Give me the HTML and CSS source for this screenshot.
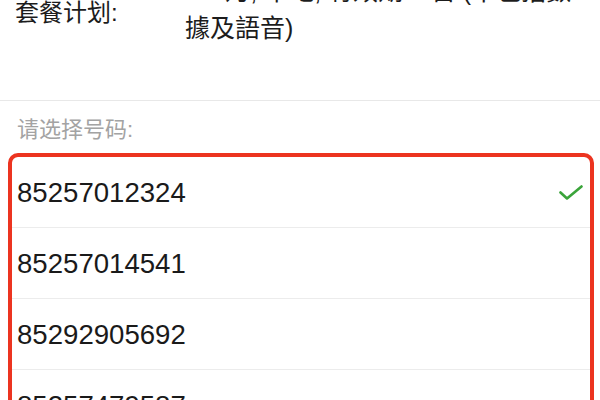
FILE: index.html
```html
<!DOCTYPE html>
<html lang="zh">
<head>
<meta charset="utf-8">
<link rel="stylesheet" href="styles.css">
</head>
<body>
<div class="page">
  <div class="plan">
    <div class="plan-label">套餐计划:</div>
    <div class="plan-value">4G/月, 本地, 有效期30日 (不包括數據及語音)</div>
  </div>
  <div class="pick">
    <div class="pick-title">请选择号码:</div>
    <div class="numbers">
      <div class="row selected">
        <span class="num">85257012324</span>
        <svg class="check" width="24" height="16" viewBox="0 0 24 16"><path d="M1.5 7.5 L8 13.5 L22.5 1.5" fill="none" stroke="#3aa43a" stroke-width="2.6" stroke-linecap="round" stroke-linejoin="round"/></svg>
      </div>
      <div class="row"><span class="num">85257014541</span></div>
      <div class="row"><span class="num">85292905692</span></div>
      <div class="row"><span class="num">85257479587</span></div>
    </div>
  </div>
</div>
</body>
</html>
```

FILE: styles.css
```css
html, body {
  margin: 0;
  padding: 0;
  background: #ffffff;
  overflow: hidden;
}
body {
  width: 600px;
  height: 400px;
  font-family: "Liberation Sans", "Noto Sans CJK SC", sans-serif;
  color: #1c1c1c;
}
.page {
  margin-top: -27px;
}
.plan {
  display: flex;
  align-items: center;
  padding: 0 10px 53px 15px;
  border-bottom: 1px solid #e8e8e8;
}
.plan-label {
  flex: 0 0 170px;
  font-size: 24px;
  line-height: 37px;
  margin-top: 5px;
}
.plan-value {
  flex: 1;
  font-size: 25px;
  line-height: 37px;
  width: 400px;
  word-break: break-all;
  height: 74px;
  overflow: hidden;
}
.pick {
  padding-top: 16px;
}
.pick-title {
  padding-left: 17px;
  font-size: 22px;
  line-height: 26px;
  color: #a3a3a3;
  margin-bottom: 10px;
}
.numbers {
  margin-left: 8px;
  width: 578px;
  border: 4px solid #ec3420;
  border-radius: 10px;
}
.row {
  display: flex;
  align-items: center;
  justify-content: space-between;
  height: 70px;
  padding: 0 7px 0 5px;
  border-bottom: 1px solid #ececec;
}
.num {
  font-size: 27.6px;
  color: #1a1a1a;
  padding-top: 2px;
}
.check {
  display: block;
  margin-top: 2px;
}
```
